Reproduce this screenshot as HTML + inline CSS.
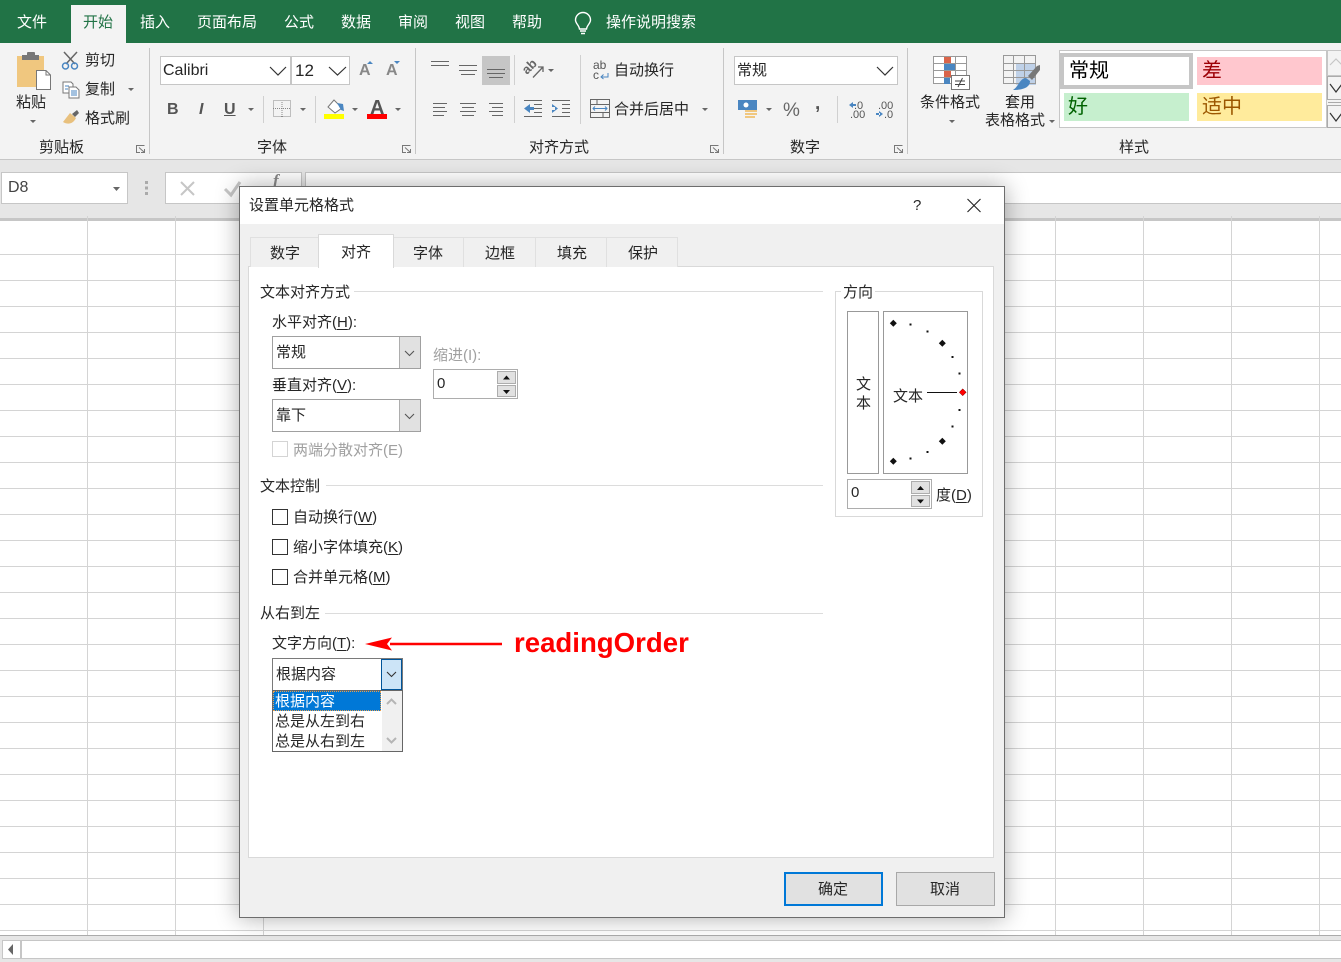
<!DOCTYPE html>
<html lang="zh-CN"><head><meta charset="utf-8"><title>设置单元格格式</title>
<style>
html,body{margin:0;padding:0;width:1341px;height:962px;overflow:hidden;background:#fff}
body{position:relative;font:15px/20px "Liberation Sans","Noto Sans CJK SC",sans-serif;color:#262626}
.t{position:absolute;white-space:nowrap;margin-top:1px;font:15px/20px "Liberation Sans","Noto Sans CJK SC",sans-serif}
.b{position:absolute;box-sizing:border-box}
.w{color:#fff}
.g{color:#a0a0a0}
.l{background:#fff;border:1px solid #c6c6c6}
svg{position:absolute;left:0;top:0;overflow:visible}
u{text-underline-offset:2px}
</style></head><body>
<div class="b" style="left:0;top:0;width:1341px;height:43px;background:#217346"></div>
<div class="b" style="left:71px;top:5px;width:55px;height:38px;background:#f3f3f3"></div>
<div class="b" style="left:0;top:43px;width:1341px;height:116px;background:#f3f3f3"></div>
<div class="b" style="left:0;top:159px;width:1341px;height:60px;background:#e6e6e6;border-top:1px solid #c6c6c6"></div>
<div class="b" style="left:0;top:218px;width:1341px;height:3px;background:#c6c6c6"></div>

<div class="t w" style="left:17px;top:12px">文件</div>
<div class="t" style="left:83px;top:12px;color:#217346">开始</div>
<div class="t w" style="left:140px;top:12px">插入</div>
<div class="t w" style="left:197px;top:12px">页面布局</div>
<div class="t w" style="left:284px;top:12px">公式</div>
<div class="t w" style="left:341px;top:12px">数据</div>
<div class="t w" style="left:398px;top:12px">审阅</div>
<div class="t w" style="left:455px;top:12px">视图</div>
<div class="t w" style="left:512px;top:12px">帮助</div>
<div class="t w" style="left:606px;top:12px">操作说明搜索</div>

<!-- combos -->
<div class="b l" style="left:160px;top:56px;width:131px;height:29px"></div>
<div class="b l" style="left:291px;top:56px;width:59px;height:29px"></div>
<div class="b l" style="left:734px;top:56px;width:164px;height:29px"></div>
<div class="b" style="left:482px;top:56px;width:28px;height:29px;background:#c6c6c6"></div>
<!-- style gallery -->
<div class="b l" style="left:1059px;top:50px;width:268px;height:78px"></div>
<div class="b" style="left:1060px;top:53px;width:133px;height:36px;background:#fff;border:4px solid #c6c6c6"></div>
<div class="b" style="left:1197px;top:57px;width:125px;height:28px;background:#ffc7ce"></div>
<div class="b" style="left:1064px;top:93px;width:125px;height:28px;background:#c6efce"></div>
<div class="b" style="left:1197px;top:93px;width:125px;height:28px;background:#ffeb9c"></div>
<div class="b" style="left:1327px;top:50px;width:14px;height:26px;border:1px solid #c6c6c6;border-right:0;background:#f3f3f3"></div>
<div class="b" style="left:1327px;top:76px;width:14px;height:24px;border:1px solid #ababab;border-right:0;background:#f3f3f3"></div>
<div class="b" style="left:1327px;top:105px;width:14px;height:23px;border:1px solid #ababab;border-right:0;background:#f3f3f3"></div>

<div class="t" style="left:16px;top:92px">粘贴</div>
<div class="t" style="left:85px;top:50px">剪切</div>
<div class="t" style="left:85px;top:79px">复制</div>
<div class="t" style="left:85px;top:108px">格式刷</div>
<div class="t" style="left:39px;top:137px">剪贴板</div>
<div class="t" style="left:163px;top:60px;font-size:16px">Calibri</div>
<div class="t" style="left:295px;top:60px;font-size:17px">12</div>
<div class="t" style="left:257px;top:137px">字体</div>
<div class="t" style="left:614px;top:60px">自动换行</div>
<div class="t" style="left:614px;top:99px">合并后居中</div>
<div class="t" style="left:529px;top:137px">对齐方式</div>
<div class="t" style="left:737px;top:60px">常规</div>
<div class="t" style="left:783px;top:100px;font-size:19px;color:#666">%</div>
<div class="t" style="left:815px;top:93px;font-size:19px;font-weight:bold;color:#555">,</div>
<div class="t" style="left:790px;top:137px">数字</div>
<div class="t" style="left:920px;top:92px">条件格式</div>
<div class="t" style="left:1005px;top:92px">套用</div>
<div class="t" style="left:985px;top:110px">表格格式</div>
<div class="t" style="left:1119px;top:137px">样式</div>
<div class="t" style="left:1069px;top:60px;font-size:20px;color:#000">常规</div>
<div class="t" style="left:1202px;top:60px;font-size:20px;color:#9c0006">差</div>
<div class="t" style="left:1068px;top:96px;font-size:20px;color:#006100">好</div>
<div class="t" style="left:1202px;top:96px;font-size:20px;color:#9c5700">适中</div>
<div class="t" style="left:167px;top:99px;font-size:16px;font-weight:bold;color:#555">B</div>
<div class="t" style="left:199px;top:99px;font-size:16px;font-weight:bold;font-style:italic;color:#555">I</div>
<div class="t" style="left:224px;top:99px;font-size:16px;font-weight:bold;color:#555;text-decoration:underline">U</div>
<div class="t" style="left:371px;top:97px;font-size:20px;font-weight:bold;color:#555;margin-left:-1px">A</div>
<div class="t" style="left:359px;top:60px;font-size:16px;font-weight:bold;color:#888">A</div>
<div class="t" style="left:386px;top:60px;font-size:16px;font-weight:bold;color:#888">A</div>

<!-- formula bar -->
<div class="b l" style="left:1px;top:172px;width:127px;height:32px"></div>
<div class="b l" style="left:165px;top:172px;width:137px;height:32px"></div>
<div class="b l" style="left:305px;top:172px;width:1036px;height:32px;border-right:0"></div>
<div class="t" style="left:8px;top:177px;font-size:16px;color:#444">D8</div>
<div class="t" style="left:273px;top:170px;font:italic bold 17px/20px 'Liberation Serif',serif;color:#8a8a8a">f</div>

<!-- grid and ribbon icons -->
<svg width="1341" height="962" viewBox="0 0 1341 962" fill="none">
<g stroke="#d4d4d4" stroke-width="1">
<path d="M87.5 216V935M175.5 216V935M263.5 216V935M1055.5 216V935M1143.5 216V935M1231.5 216V935M1319.5 216V935"/>
<path d="M0 254.5H1341M0 280.5H1341M0 306.5H1341M0 332.5H1341M0 358.5H1341M0 384.5H1341M0 410.5H1341M0 436.5H1341M0 462.5H1341M0 488.5H1341M0 514.5H1341M0 540.5H1341M0 566.5H1341M0 592.5H1341M0 618.5H1341M0 644.5H1341M0 670.5H1341M0 696.5H1341M0 722.5H1341M0 748.5H1341M0 774.5H1341M0 800.5H1341M0 826.5H1341M0 852.5H1341M0 878.5H1341M0 904.5H1341M0 930.5H1341"/>
</g>
<!-- bulb -->
<g stroke="#fff" stroke-width="1.4"><path d="M579.5 29C579 25 575.5 23.500 575.500 20A7.500 7.500 0 0 1 590.500 20C590.500 23.500 587 25 586.500 29Z"/><path d="M580 31H586M581 33.500H585"/></g>
<!-- ribbon separators -->
<path d="M149.500 48V154M415.500 48V154M723.500 48V154M907.500 48V154" stroke="#c6c6c6"/>
<path d="M263.500 96V123M315.500 96V123M514.500 55V85M514.500 96V123M580.500 55V124M837.500 96V123" stroke="#d0d0d0"/>
<!-- paste -->
<path d="M17 56H44V87H17Z" fill="#f0c77f"/>
<path d="M22 56V55H27V53Q27 52 28 52H34Q35 52 35 53V55H39V60H22Z" fill="#777"/>
<path d="M36.500 70.500H46L50.500 75V89.500H36.500Z" fill="#fff" stroke="#777"/>
<path d="M46 70.500V75H50.500" stroke="#777"/>
<!-- scissors -->
<g stroke="#666" stroke-width="1.500"><path d="M64 52L75 64M77 52L66 64"/></g>
<g stroke="#4a86c1" stroke-width="1.500"><circle cx="65.500" cy="66" r="3"/><circle cx="74.500" cy="66" r="3"/></g>
<!-- copy -->
<path d="M63 82H71L73 84V93H63Z" fill="#fff" stroke="#777"/>
<path d="M69 87H76L79 90V98H69Z" fill="#fff" stroke="#777"/>
<path d="M65 86H69M65 89H68M71 91H77M71 93H77M71 95H77" stroke="#4a86c1"/>
<!-- brush -->
<path d="M63 122L70 113L76 118C73 124 68 125 63 122Z" fill="#e8c07d"/>
<path d="M72 114L77 110L79 113L75 117Z" fill="#666"/>
<!-- carets -->
<g fill="#666">
<path d="M30 120H36L33 123ZM128 88H134L131 91ZM248 108H254L251 111ZM300 108H306L303 111ZM352 108H358L355 111ZM395 108H401L398 111ZM548 69H554L551 72ZM702 108H708L705 111ZM766 108H772L769 111ZM949 120H955L952 123ZM1049 120H1055L1052 123ZM113 187H120L116.500 191Z"/>
</g>
<!-- launchers -->
<g stroke="#777"><path d="M136.500 148.500V145.500H144.500M136.500 148.500V152.500H140M139 147.500L144.500 152.500M144.500 149V152.500H141"/>
<path d="M402.500 148.500V145.500H410.500M402.500 148.500V152.500H406M405 147.500L410.500 152.500M410.500 149V152.500H407"/>
<path d="M710.500 148.500V145.500H718.500M710.500 148.500V152.500H714M713 147.500L718.500 152.500M718.500 149V152.500H715"/>
<path d="M894.500 148.500V145.500H902.500M894.500 148.500V152.500H898M897 147.500L902.500 152.500M902.500 149V152.500H899"/></g>
<!-- chevrons -->
<g stroke="#333" stroke-width="1.200"><path d="M270 67L278 75L286 67M329 67L337.500 75L346 67M877 67L885 75L893 67M1330 84L1336 92L1342 84M1330 113L1336 121L1342 113"/></g>
<path d="M1330 65L1336 59L1342 65" stroke="#c6c6c6" stroke-width="1.200"/>
<path d="M1328 102.500H1341" stroke="#aaa"/>
<!-- a a arrows -->
<path d="M367 64L370 61L373 64ZM394 61H400L397 64Z" fill="#4a86c1"/>
<!-- borders -->
<g stroke="#888" stroke-dasharray="1 1"><path d="M273.500 100.500H290.500V116.500H273.500ZM282 100V117M273 108.500H291"/></g>
<!-- fill colour -->
<path d="M334 100L342 108L335 113L328 107Z" fill="#fff" stroke="#777"/>
<path d="M337 103L343 104L344 111L341 110Z" fill="#4a86c1"/>
<rect x="324" y="114" width="20" height="5" fill="#ffff00"/>
<rect x="367" y="114" width="20" height="5" fill="#ff0000"/>
<!-- alignment -->
<g stroke="#666">
<path d="M431 61.500H449M431 65.500H449M459 65.500H477M459 70.500H477M461 74.500H475M487 69.500H505M487 73.500H505M489 77.500H503"/>
<path d="M433 103.500H447M433 107.500H445M433 111.500H447M433 115.500H444M460 103.500H476M462 107.500H474M460 111.500H476M462 115.500H474M489 103.500H503M492 107.500H503M489 111.500H503M492 115.500H503"/>
<path d="M524 100.500H542M534 104.500H542M534 108.500H542M534 112.500H542M524 116.500H542M552 100.500H570M552 116.500H570M562 104.500H570M562 108.500H570M562 112.500H570"/>
</g>
<path d="M524 108.500L530 104V113ZM529 107H534V110H529ZM558 108.500L552 104V113ZM552 107H555V110H552Z" fill="#4a86c1"/>
<!-- orientation -->
<text x="527" y="75" transform="rotate(-45 527 75)" font-family="Liberation Sans" font-weight="bold" font-size="13" fill="#666">ab</text>
<path d="M533 77.500L542.500 67.500M538 67H543V72" stroke="#666" stroke-width="1.300"/>
<!-- wrap -->
<text x="593" y="69" font-family="Liberation Sans" font-size="12" fill="#555">ab</text>
<text x="593" y="79" font-family="Liberation Sans" font-size="12" fill="#555">c</text>
<path d="M608 73V77H601M603.500 74.500L601 77L603.500 79" stroke="#4a86c1"/>
<!-- merge -->
<path d="M590.500 99.500H609.500V117.500H590.500ZM590 104.500H610M590 112.500H610M597 100V104M603 113V117" stroke="#666"/>
<path d="M593 108.500H607M595 106.500L593 108.500L595 110.500M605 106.500L607 108.500L605 110.500" stroke="#4a86c1"/>
<!-- currency -->
<rect x="738" y="100" width="19" height="10" fill="#4a86c1"/>
<ellipse cx="746" cy="105" rx="2.500" ry="2.500" fill="#fff"/>
<path d="M745 111H757M745 114H757M745 117H755" stroke="#f0c77f" stroke-width="2"/>
<!-- decimals -->
<text x="854" y="109" font-family="Liberation Sans" font-size="11" fill="#555">.0</text>
<text x="850" y="118" font-family="Liberation Sans" font-size="11" fill="#555">.00</text>
<text x="878" y="109" font-family="Liberation Sans" font-size="11" fill="#555">.00</text>
<text x="884" y="118" font-family="Liberation Sans" font-size="11" fill="#555">.0</text>
<path d="M849 105L853 102V108ZM852 104H856V106H852ZM883 114L879 111V117ZM876 113H880V115H876Z" fill="#4a86c1"/>
<!-- conditional formatting -->
<path d="M933.500 56.500H966.500V83.500H933.500ZM933 63.500H967M933 70.500H967M933 77.500H967M944.500 56V84M955.500 56V84" stroke="#999" fill="#fff"/>
<path d="M944 57H951V63H944ZM944 71H951V77H944Z" fill="#d9644a"/>
<path d="M944 64H955V70H944ZM944 78H950V84H944Z" fill="#4a86c1"/>
<rect x="951.500" y="75.500" width="18" height="14" fill="#fff" stroke="#777"/>
<path d="M955 81H965M955 84.500H965M962.500 78L958 87" stroke="#444"/>
<!-- table style -->
<rect x="1016" y="63" width="20" height="22" fill="#bfd1e8"/>
<path d="M1003.500 55.500H1035.500V83.500H1003.500ZM1003 63.500H1036M1003 70.500H1036M1003 77.500H1036M1013.500 55V84M1024.500 55V84" stroke="#999"/>
<path d="M1028 76L1037 66L1040 65V70L1032 80Z" fill="#777"/>
<path d="M1013 90C1019 86 1020 78 1026 78L1030 81C1030 88 1022 90 1013 90Z" fill="#4a86c1"/>
<!-- formula icons -->
<path d="M181 182L194 195M194 182L181 195" stroke="#c6c6c6" stroke-width="2"/>
<path d="M225 189L231 195L240 182" stroke="#c6c6c6" stroke-width="3"/>
<g fill="#aaa"><rect x="145" y="181" width="3" height="3"/><rect x="145" y="186.500" width="3" height="3"/><rect x="145" y="192" width="3" height="3"/></g>
</svg>

<!-- bottom scrollbar -->
<div class="b" style="left:0;top:935px;width:1341px;height:27px;background:#e6e6e6;border-top:1px solid #ababab"></div>
<div class="b" style="left:2px;top:940px;width:1339px;height:19px;background:#fff;border:1px solid #c6c6c6;border-right:0"></div>
<div class="b" style="left:20px;top:941px;width:2px;height:17px;background:#c6c6c6"></div>
<svg width="1341" height="962" viewBox="0 0 1341 962"><path d="M8 949.500L13 944V955Z" fill="#666"/></svg>

<!-- dialog -->
<div class="b" style="left:239px;top:186px;width:766px;height:732px;background:#f0f0f0;border:1px solid #6d6d6d;box-shadow:0 0 22px rgba(0,0,0,.33)"></div>
<div class="b" style="left:240px;top:187px;width:764px;height:37px;background:#fff"></div>
<div class="t" style="left:249px;top:195px">设置单元格格式</div>
<div class="t" style="left:913px;top:195px">?</div>
<div class="b" style="left:248px;top:266px;width:746px;height:592px;background:#fff;border:1px solid #d9d9d9"></div>
<div class="b" style="left:250px;top:237px;width:69px;height:30px;background:#f0f0f0;border:1px solid #e0e0e0;border-bottom:0"></div>
<div class="b" style="left:393px;top:237px;width:71px;height:30px;background:#f0f0f0;border:1px solid #e0e0e0;border-bottom:0;border-left:0"></div>
<div class="b" style="left:464px;top:237px;width:72px;height:30px;background:#f0f0f0;border:1px solid #e0e0e0;border-bottom:0;border-left:0"></div>
<div class="b" style="left:536px;top:237px;width:71px;height:30px;background:#f0f0f0;border:1px solid #e0e0e0;border-bottom:0;border-left:0"></div>
<div class="b" style="left:607px;top:237px;width:71px;height:30px;background:#f0f0f0;border:1px solid #e0e0e0;border-bottom:0;border-left:0"></div>
<div class="b" style="left:318px;top:234px;width:76px;height:34px;background:#fff;border:1px solid #d9d9d9;border-bottom:0"></div>
<div class="t" style="left:270px;top:243px">数字</div>
<div class="t" style="left:341px;top:242px">对齐</div>
<div class="t" style="left:413px;top:243px">字体</div>
<div class="t" style="left:485px;top:243px">边框</div>
<div class="t" style="left:557px;top:243px">填充</div>
<div class="t" style="left:628px;top:243px">保护</div>

<div class="t" style="left:260px;top:282px">文本对齐方式</div>
<div class="b" style="left:354px;top:291px;width:469px;height:1px;background:#dcdcdc"></div>
<div class="t" style="left:272px;top:312px">水平对齐(<u>H</u>):</div>
<div class="b" style="left:272px;top:336px;width:149px;height:33px;background:#fff;border:1px solid #a0a0a0"></div>
<div class="b" style="left:399px;top:337px;width:21px;height:31px;background:#e1e1e1;border-left:1px solid #adadad"></div>
<div class="t" style="left:276px;top:342px">常规</div>
<div class="t g" style="left:433px;top:345px">缩进(I):</div>
<div class="b" style="left:433px;top:369px;width:85px;height:30px;background:#fff;border:1px solid #adadad"></div>
<div class="b" style="left:497px;top:371px;width:19px;height:13px;background:#e1e1e1;border:1px solid #adadad"></div>
<div class="b" style="left:497px;top:385px;width:19px;height:12px;background:#e1e1e1;border:1px solid #adadad"></div>
<div class="t" style="left:437px;top:373px">0</div>
<div class="t" style="left:272px;top:375px">垂直对齐(<u>V</u>):</div>
<div class="b" style="left:272px;top:399px;width:149px;height:33px;background:#fff;border:1px solid #a0a0a0"></div>
<div class="b" style="left:399px;top:400px;width:21px;height:31px;background:#e1e1e1;border-left:1px solid #adadad"></div>
<div class="t" style="left:276px;top:405px">靠下</div>
<div class="b" style="left:272px;top:441px;width:16px;height:16px;background:#fff;border:1px solid #d4d4d4"></div>
<div class="t g" style="left:293px;top:440px">两端分散对齐(E)</div>

<div class="t" style="left:260px;top:476px">文本控制</div>
<div class="b" style="left:326px;top:485px;width:497px;height:1px;background:#dcdcdc"></div>
<div class="b" style="left:272px;top:509px;width:16px;height:16px;background:#fff;border:1px solid #333"></div>
<div class="t" style="left:293px;top:507px">自动换行(<u>W</u>)</div>
<div class="b" style="left:272px;top:539px;width:16px;height:16px;background:#fff;border:1px solid #333"></div>
<div class="t" style="left:293px;top:537px">缩小字体填充(<u>K</u>)</div>
<div class="b" style="left:272px;top:569px;width:16px;height:16px;background:#fff;border:1px solid #333"></div>
<div class="t" style="left:293px;top:567px">合并单元格(<u>M</u>)</div>

<div class="t" style="left:260px;top:603px">从右到左</div>
<div class="b" style="left:325px;top:613px;width:498px;height:1px;background:#dcdcdc"></div>
<div class="t" style="left:272px;top:633px">文字方向(<u>T</u>):</div>
<div class="b" style="left:272px;top:658px;width:131px;height:33px;background:#fff;border:1px solid #7a7a7a"></div>
<div class="b" style="left:381px;top:659px;width:21px;height:31px;background:#cce4f7;border:1px solid #005499"></div>
<div class="t" style="left:276px;top:664px">根据内容</div>
<div class="b" style="left:272px;top:690px;width:131px;height:62px;background:#fff;border:1px solid #666"></div>
<div class="b" style="left:382px;top:691px;width:20px;height:60px;background:#f0f0f0"></div>
<div class="b" style="left:273px;top:691px;width:108px;height:20px;background:#0078d7;outline:1px dotted #e8a050;outline-offset:-1px"></div>
<div class="t w" style="left:275px;top:691px">根据内容</div>
<div class="t" style="left:275px;top:711px">总是从左到右</div>
<div class="t" style="left:275px;top:731px">总是从右到左</div>

<div class="b" style="left:835px;top:291px;width:148px;height:226px;border:1px solid #d9d9d9"></div>
<div class="t" style="left:841px;top:282px;background:#fff;padding:0 2px">方向</div>
<div class="b" style="left:847px;top:311px;width:32px;height:163px;border:1px solid #999"></div>
<div class="b" style="left:883px;top:311px;width:85px;height:163px;border:1px solid #999"></div>
<div class="t" style="left:856px;top:374px">文</div>
<div class="t" style="left:856px;top:393px">本</div>
<div class="t" style="left:893px;top:386px">文本</div>
<div class="b" style="left:847px;top:479px;width:85px;height:30px;background:#fff;border:1px solid #adadad"></div>
<div class="b" style="left:911px;top:481px;width:19px;height:13px;background:#e1e1e1;border:1px solid #adadad"></div>
<div class="b" style="left:911px;top:495px;width:19px;height:12px;background:#e1e1e1;border:1px solid #adadad"></div>
<div class="t" style="left:851px;top:482px">0</div>
<div class="t" style="left:936px;top:485px">度(<u>D</u>)</div>

<div class="b" style="left:784px;top:872px;width:99px;height:34px;background:#e1e1e1;border:2px solid #0078d7"></div>
<div class="b" style="left:896px;top:872px;width:99px;height:34px;background:#e1e1e1;border:1px solid #a8a8a8"></div>
<div class="t" style="left:818px;top:879px">确定</div>
<div class="t" style="left:930px;top:879px">取消</div>

<div class="t" style="left:514px;top:626px;font:bold 27.600px/32px 'Liberation Sans',sans-serif;color:#f00">readingOrder</div>

<svg width="1341" height="962" viewBox="0 0 1341 962" fill="none">
<path d="M967.500 199L980.500 212M980.500 199L967.500 212" stroke="#222" stroke-width="1.100"/>
<g stroke="#555" stroke-width="1.100"><path d="M405 351L409.500 355.500L414 351M405 414L409.500 418.500L414 414"/></g>
<path d="M387 672L391.500 676.500L396 672" stroke="#333" stroke-width="1.100"/>
<path d="M387 704L391.500 699.500L396 704M387 738L391.500 742.500L396 738" stroke="#b5b5b5" stroke-width="2"/>
<g fill="#111">
<path d="M503 379.500L506.500 375.500L510 379.500ZM503 390L506.500 394L510 390ZM917 490L920.500 486L924 490ZM917 499.500L920.500 503.500L924 499.500Z"/>
<path d="M893.300 319.800L896.800 323.300L893.300 326.800L889.800 323.300ZM942.300 339.800L945.800 343.300L942.300 346.800L938.800 343.300ZM942.300 437.800L945.800 441.300L942.300 444.800L938.800 441.300ZM893.300 457.800L896.800 461.300L893.300 464.800L889.800 461.300Z"/>
<rect x="909.500" y="323.500" width="2" height="2"/><rect x="926.500" y="330.500" width="2" height="2"/><rect x="951.500" y="356" width="2" height="2"/><rect x="958.500" y="372.500" width="2" height="2"/><rect x="958.500" y="409" width="2" height="2"/><rect x="951.500" y="425.500" width="2" height="2"/><rect x="926.500" y="451" width="2" height="2"/><rect x="909.500" y="457.500" width="2" height="2"/>
</g>
<path d="M927 392.500H957" stroke="#111"/>
<path d="M962.700 388.800L966.200 392.300L962.700 395.800L959.200 392.300Z" fill="#f00" stroke="#600" stroke-width=".5"/>
<path d="M390 644H502" stroke="#f00" stroke-width="2.500"/>
<path d="M365 644L392 637.500L387 644L392 650.500Z" fill="#f00"/>
</svg>
</body></html>
